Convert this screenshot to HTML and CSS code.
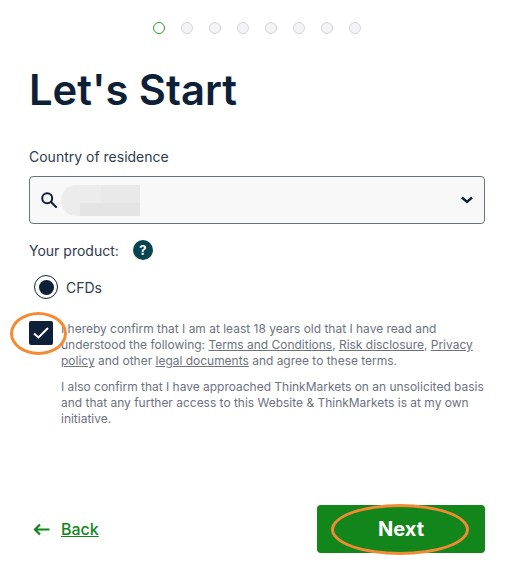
FILE: index.html
```html
<!DOCTYPE html>
<html lang="en">
<head>
<meta charset="utf-8">
<title>Let's Start</title>
<link rel="stylesheet" href="styles.css">
</head>
<body>
<main class="page">
  <div class="steps">
    <span class="dot dot-active"></span><span class="dot"></span><span class="dot"></span><span class="dot"></span><span class="dot"></span><span class="dot"></span><span class="dot"></span><span class="dot"></span>
  </div>
  <h1 class="title">Let's Start</h1>
  <label class="label">Country of residence</label>
  <div class="select">
    <svg class="icon-search" width="16" height="16" viewBox="0 0 16 16" fill="none" stroke="#0e1f38" stroke-width="2"><circle cx="6.2" cy="6.2" r="5"/><path d="M9.8 9.8 L15 15" stroke-linecap="round"/></svg>
    <div class="redacted"><span class="redacted-top"></span><span class="redacted-bottom"></span></div>
    <svg class="icon-chevron" width="12" height="8" viewBox="0 0 12 8" fill="none" stroke="#0e1f38" stroke-width="2.4"><path d="M1 1.5 L6 6 L11 1.5"/></svg>
  </div>
  <div class="product">
    <span class="product-label">Your product:</span>
    <span class="help">?</span>
  </div>
  <div class="radio-row">
    <span class="radio"><span class="radio-inner"></span></span>
    <span class="radio-text">CFDs</span>
  </div>
  <div class="consent">
    <span class="checkbox"><svg width="16" height="12" viewBox="0 0 16 12" fill="none" stroke="#fff" stroke-width="2"><path d="M1 6.5 L5.5 10.5 L15 1"/></svg></span>
    <div class="legal">
      <p>I hereby confirm that I am at least 18 years old that I have read and understood the following: <a>Terms and Conditions</a>, <a>Risk disclosure</a>, <a>Privacy policy</a> and other <a>legal documents</a> and agree to these terms.</p>
      <p>I also confirm that I have approached ThinkMarkets on an unsolicited basis and that any further access to this Website &amp; ThinkMarkets is at my own initiative.</p>
    </div>
  </div>
  <div class="actions">
    <a class="back">
      <svg width="17" height="13" viewBox="0 0 17 13" fill="none" stroke="#13861b" stroke-width="2.2"><path d="M16.5 6.5 H2 M7 1.5 L2 6.5 L7 11.5"/></svg>
      <span class="back-text">Back</span>
    </a>
    <button class="next">Next</button>
  </div>
  <span class="mark mark-check"></span>
  <span class="mark mark-next"></span>
</main>
</body>
</html>
```
FILE: styles.css
```css
* { box-sizing: border-box; }
html, body { margin: 0; background: #fff; }
body { font-family: Inter, "Liberation Sans", sans-serif; color: #0e1f38; }
.page { position: relative; width: 516px; height: 573px; padding: 22px 31px 0 29px; overflow: hidden; }
.steps { display: flex; justify-content: center; gap: 16px; height: 12px; }
.dot { width: 12px; height: 12px; border-radius: 50%; background: #f4f4f6; border: 1px solid #d3d4d8; }
.dot-active { background: #fff; border-color: #2b9a37; }
.title { margin: 31px 0 0; font-size: 41.75px; line-height: 50px; font-weight: 600; color: #0e1f38; }
.label { display: block; margin-top: 32px; font-size: 14px; line-height: 20px; color: #2f3b4e; }
.select { display: flex; align-items: center; height: 48px; margin-top: 9px; padding: 0 12px 0 11px; background: #f8f8f8; border: 1px solid #6b7280; border-radius: 4px; }
.icon-search { flex: none; margin-right: 4px; }
.redacted { position: relative; width: 79px; height: 31px; margin-right: auto; background: #ececec; border-radius: 16px 0 0 16px; }
.redacted-top { position: absolute; left: 40px; top: 0; width: 39px; height: 18px; background: #e9e9e9; }
.redacted-bottom { position: absolute; left: 19px; top: 18px; width: 60px; height: 13px; background: #e4e4e4; }
.icon-chevron { flex: none; margin-right: -1px; }
.product { display: flex; align-items: center; gap: 14px; margin-top: 16px; height: 20px; }
.product-label { font-size: 14px; color: #2f3b4e; }
.help { width: 20px; height: 20px; border-radius: 50%; background: #06444f; color: #fff; font-size: 13px; font-weight: 700; line-height: 20px; text-align: center; }
.radio-row { display: flex; align-items: center; gap: 8px; margin-top: 15px; padding-left: 5px; height: 24px; }
.radio { display: flex; align-items: center; justify-content: center; width: 24px; height: 24px; border: 1.5px solid #0e1f38; border-radius: 50%; }
.radio-inner { width: 15px; height: 15px; border-radius: 50%; background: #0e1f38; }
.radio-text { font-size: 14px; color: #2f3b4e; }
.consent { display: flex; margin-top: 21px; }
.checkbox { flex: none; display: flex; align-items: center; justify-content: center; width: 24px; height: 24px; margin-top: 1px; background: #0e1f38; border-radius: 2px; }
.legal { margin-left: 8px; margin-right: -2px; font-size: 11.98px; line-height: 16px; color: #6b7280; margin-top: 1px; }
.legal p { margin: 0 0 10px; }
.legal a { text-decoration: underline; }
.actions { position: absolute; left: 33px; right: 31px; top: 505px; display: flex; justify-content: space-between; align-items: center; }
.back { display: flex; align-items: center; gap: 11px; color: #13861b; }
.back-text { font-size: 16px; font-weight: 500; text-decoration: underline; }
.next { width: 168px; height: 48px; background: #13861b; color: #fff; border: 0; border-radius: 4px; font: 700 20px Inter, sans-serif; }
.mark { position: absolute; border: 3px solid #f58a35; border-radius: 50%; }
.mark-check { left: 10px; top: 312px; width: 57px; height: 43px; }
.mark-next { left: 331px; top: 504px; width: 138px; height: 51px; }
```
